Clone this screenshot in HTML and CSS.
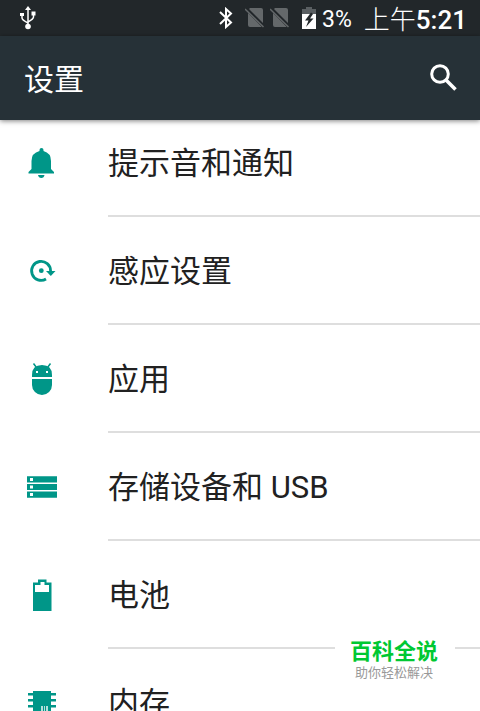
FILE: index.html
```
<!DOCTYPE html>
<html lang="zh-CN">

<head>
  <meta charset="UTF-8">
  <meta name="viewport" content="width=device-width, initial-scale=1.0">
  <title>设置</title>
  <link rel="stylesheet" href="styles.css">
</head>

<body>
  <div class="status-bar">
    <svg class="usb" width="16" height="24" viewBox="0 0 16 24" fill="none" stroke="#fff" stroke-width="1.5">
      <path d="M8 3v18M2 9v3q0 2 6 5M13.500 8v3q0 2-5.500 5" />
      <path d="M8 0l3 4H5zM0 7h4v3H0zM11.500 5.500h4v4h-4z" fill="#fff" stroke="none" />
      <circle cx="8" cy="20.500" r="2.800" fill="#fff" stroke="none" />
    </svg>
    <div class="status-right">
      <svg width="14" height="22" viewBox="0 0 14 22" fill="none" stroke="#fff" stroke-width="2">
        <path d="M1 5l11 10.500L7 20V2l5 4.500L1 17" />
      </svg>
      <div class="sims">
        <svg width="20" height="22" viewBox="0 0 20 22">
          <path d="M5 1h11q2 0 2 2v13L4 2zM3 4l14 16H5q-2 0-2-2z" fill="#64686a" />
          <path d="M1 2l18 18" stroke="#22272a" stroke-width="3" />
          <path d="M0 2l18.500 18" stroke="#64686a" stroke-width="1.500" />
        </svg>
        <svg width="20" height="22" viewBox="0 0 20 22">
          <path d="M5 1h11q2 0 2 2v13L4 2zM3 4l14 16H5q-2 0-2-2z" fill="#64686a" />
          <path d="M1 2l18 18" stroke="#22272a" stroke-width="3" />
          <path d="M0 2l18.500 18" stroke="#64686a" stroke-width="1.500" />
        </svg>
      </div>
      <svg class="charge" width="14" height="22" viewBox="0 0 14 22">
        <path d="M4 0h6v2h4v5H0V2h4z" fill="#5a5f62" />
        <path d="M0 7h14v15H0z" fill="#fff" />
        <path d="M9 5.500L3 13.500h3.500L4 20l7.500-8.500H8L11 7z" fill="#22272a" />
      </svg>
      <span class="percent">3%</span>
      <span class="clock"><span class="ampm">上午</span>5:21</span>
    </div>
  </div>

  <header class="app-bar">
    <h1>设置</h1>
    <button class="search" type="button" aria-label="搜索">
      <svg width="36" height="36" viewBox="0 0 36 36" fill="none" stroke="#fff" stroke-width="3">
        <circle cx="14" cy="14" r="8.300" />
        <path d="M20 20l9.500 9.500" stroke-width="3.500" />
      </svg>
    </button>
  </header>

  <main>
    <ul class="settings">
      <li>
        <a href="#sound">
          <svg class="icon" viewBox="0 0 36 36">
            <path d="M15.500 6q0-2 2-2t2 2v1q7.500 2 7.500 10v8l3 3v1.500H4.500V28l3-3v-8q0-8 8-10zM14 31h6.500q-.5 3-3.200 3T14 31z" />
          </svg>
          <span class="label">提示音和通知</span>
        </a>
      </li>
      <li>
        <a href="#gesture">
          <svg class="icon" viewBox="0 0 36 36">
            <path d="M22 27A9.500 9.500 0 1 1 26.600 19" fill="none" stroke="#009688" stroke-width="2.800" />
            <path d="M22 19h9.500l-4.700 5z" />
            <circle cx="17.300" cy="18.700" r="2.400" />
          </svg>
          <span class="label">感应设置</span>
        </a>
      </li>
      <li>
        <a href="#apps">
          <svg class="icon" viewBox="0 0 36 36">
            <path d="M8 17v-2Q8 5 18 5t10 10v2zM8 19h20v6a10 10 0 0 1-20 0z" />
            <path d="M9.500 3.500l3 4M26.500 3.500l-3 4" stroke="#009688" stroke-width="1.500" />
            <path d="M12 11h2v2h-2zM22 11h2v2h-2z" fill="#fff" />
          </svg>
          <span class="label">应用</span>
        </a>
      </li>
      <li>
        <a href="#storage">
          <svg class="icon" viewBox="0 0 36 36">
            <path d="M3 8.300h30v6.200H3zM3 16h30v6H3zM3 23.500h30v6.200H3z" />
            <path d="M6 10h3v3H6zM6 17.500h3v3H6zM6 25h3v3H6z" fill="#fff" />
          </svg>
          <span class="label">存储设备和 USB</span>
        </a>
      </li>
      <li>
        <a href="#battery">
          <svg class="icon" viewBox="0 0 36 36">
            <path fill-rule="evenodd" d="M9 6.500h5v-3h8.500v3h5V35H9zM11 9v7h14V9h-4.500V6h-4v3z" />
          </svg>
          <span class="label">电池</span>
        </a>
      </li>
      <li>
        <a href="#memory">
          <svg class="icon" viewBox="0 0 36 36">
            <path d="M9 7h18v22H9zM4 9h28v2.500H4zM4 15h28v2.500H4zM4 21h28v2.500H4z" />
            <path d="M17 22h2v6h-2zM20 22h1v6h-1zM22 22h2v6h-2z" fill="#b5dfdb" />
          </svg>
          <span class="label">内存</span>
        </a>
      </li>
    </ul>
  </main>

  <div class="watermark">
    <strong>百科全说</strong>
    <small>助你轻松解决</small>
  </div>
</body>

</html>
```
FILE: styles.css
```
* {
  box-sizing: border-box;
}

body {
  display: flex;
  flex-direction: column;
  margin: 0;
  height: 100vh;
  overflow: hidden;
  background-color: #fff;
  color: #212121;
  font-family: Roboto, "Noto Sans CJK SC", sans-serif;
}

svg {
  display: block;
  flex: none;
}

.status-bar {
  display: flex;
  flex: none;
  justify-content: space-between;
  align-items: center;
  height: 36px;
  padding: 0 13px 0 20px;
  background-color: #22272a;
  color: #fff;
}

.status-right {
  display: flex;
  align-items: center;
  gap: 12px;
}

.sims {
  display: flex;
  gap: 5px;
}

.percent {
  margin-left: -6px;
  padding-top: 3px;
  font-size: 23px;
  line-height: 33px;
}

.clock {
  display: flex;
  align-items: center;
  padding-top: 4px;
  font-size: 26px;
  font-weight: 500;
  line-height: 32px;
}

.ampm {
  font-weight: 300;
}

.app-bar {
  position: relative;
  z-index: 1;
  display: flex;
  flex: none;
  justify-content: space-between;
  align-items: center;
  height: 84px;
  padding: 0 18px 0 24px;
  background-color: #263137;
  box-shadow: 0 1px 5px rgba(0, 0, 0, 0.5);
  color: #fff;
}

h1 {
  margin: 0;
  padding-bottom: 3px;
  font-size: 30px;
  font-weight: 400;
}

.search {
  padding: 0;
  border: none;
  background: none;
  cursor: pointer;
}

main {
  flex: 1;
  min-height: 0;
  overflow: hidden;
}

/* list is slightly scrolled under the app bar */
.settings {
  margin: -11px 0 0;
  padding: 0;
  list-style: none;
}

.settings a {
  display: flex;
  height: 108px;
  padding-left: 24px;
  color: inherit;
  text-decoration: none;
}

.icon {
  width: 36px;
  height: 36px;
  margin: 35px 48px 0 0;
  fill: #009688;
}

.label {
  flex: 1;
  padding-top: 4px;
  border-bottom: 2px solid #dedede;
  font-size: 31px;
  line-height: 102px;
}

.watermark {
  position: fixed;
  right: 25px;
  bottom: 20px;
  z-index: 3;
  width: 120px;
  padding: 3px 2px 12px 0;
  background-color: #fff;
  text-align: center;
}

.watermark strong {
  display: block;
  color: #00c832;
  font-size: 22px;
  font-weight: 700;
  line-height: 30px;
}

.watermark small {
  display: block;
  color: #999;
  font-size: 13px;
  line-height: 12px;
}
```
